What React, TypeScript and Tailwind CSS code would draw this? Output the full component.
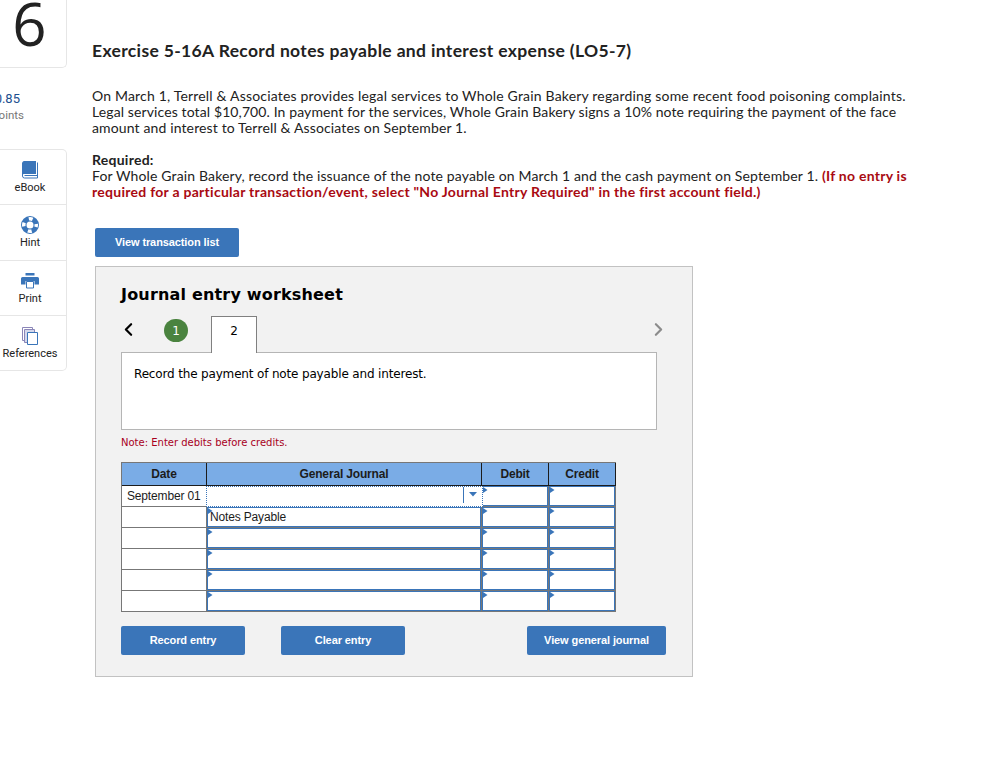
import { ChevronLeft, ChevronRight } from "lucide-react";

interface toolData {
  label: string;
  icon: React.ReactNode;
  height: string;
}

const tools: toolData[] = [
  {
    label: "eBook",
    height: "h-[55px]",
    icon: (
      <svg width="18" height="20" viewBox="0 0 18 20" fill="none">
        <path d="M3 1h12v13H3a2 2 0 0 0-1.500 1V2.500A1.500 1.500 0 0 1 3 1z" fill="#3a75b9" />
        <path d="M1.500 2.500v13.500a2 2 0 0 0 2 2h13V2.500M3.500 15.500h13" stroke="#3a75b9" strokeWidth="1" />
      </svg>
    ),
  },
  {
    label: "Hint",
    height: "h-[56px]",
    icon: (
      <svg width="18" height="20" viewBox="0 0 18 20" fill="none">
        <circle cx="9" cy="10" r="6.250" stroke="#3a75b9" strokeWidth="5.500" />
        <circle cx="9" cy="10" r="6.250" stroke="#fff" strokeWidth="3.500" strokeDasharray="4 5.817" strokeDashoffset="2" />
      </svg>
    ),
  },
  {
    label: "Print",
    height: "h-[55px]",
    icon: (
      <svg width="18" height="20" viewBox="0 0 18 20" fill="none">
        <path d="M4.500 2h9v2.500h-9z" fill="#3a75b9" />
        <path d="M1.500 6h15A1.500 1.500 0 0 1 18 7.500v6h-4.500V10h-9v3.500H0v-6A1.500 1.500 0 0 1 1.500 6z" fill="#3a75b9" />
        <path d="M5.500 10.500h7v6.500h-7z" fill="#fff" stroke="#3a75b9" />
      </svg>
    ),
  },
  {
    label: "References",
    height: "h-[55px]",
    icon: (
      <svg width="18" height="20" viewBox="0 0 18 20" stroke="#3a75b9">
        <path d="M1.500 1.500h10v13h-10z" fill="#fff" stroke="#8b86b8" />
        <path d="M3.500 3.500h10v13h-10z" fill="#d5d9ec" stroke="#8b86b8" />
        <path d="M6.500 6.500h10v12h-10z" fill="#fff" />
      </svg>
    ),
  },
];

const rows = [
  { date: "September 01", account: "" },
  { date: "", account: "Notes Payable" },
  { date: "", account: "" },
  { date: "", account: "" },
  { date: "", account: "" },
  { date: "", account: "" },
];

function Corner() {
  return (
    <svg className="absolute top-0 left-0" width="5" height="6" viewBox="0 0 5 6">
      <path d="M0 0l4.500 3L0 6z" fill="#3a75b9" />
    </svg>
  );
}

function EntryCell({ text }: { text?: string }) {
  return (
    <div className="border-r border-b border-[#777]">
      <div className="relative h-5 border border-[#3a75b9] bg-white pl-0.5 leading-[18px]">
        <Corner />
        {text}
      </div>
    </div>
  );
}

function ActiveCell() {
  return (
    <div className="relative z-10 -ml-px flex h-[21px] w-[277px] justify-end border border-dotted border-[#3a75b9] bg-white">
      <div className="mr-1 h-4 w-[15px] border-l border-[#3a75b9]">
        <svg className="mt-[5px] ml-[5px]" width="8" height="5" viewBox="0 0 8 5">
          <path d="M0 0h8L4 4.500z" fill="#3a75b9" />
        </svg>
      </div>
    </div>
  );
}

function Button({ label, width }: { label: string; width: string }) {
  return (
    <button
      className={`${width} h-[29px] rounded-[2px] bg-[#3a75b9] pb-[2px] text-[11px] font-bold tracking-[-0.1px] text-white`}
    >
      {label}
    </button>
  );
}

function Sidebar() {
  return (
    <div className="w-[67px] shrink-0 font-['Roboto',sans-serif] text-[#222]">
      <div className="h-[68px] rounded-br-[5px] border-r border-b border-[#e6e6e6] pr-[7px]">
        <div className="text-center font-['Open_Sans',sans-serif] text-[60px] leading-[46px]">6</div>
      </div>
      <div className="mt-[23px] flex h-4 w-5 justify-end text-[13px] leading-4 text-[#1c4f8f]">
        <span>0.85</span>
      </div>
      <div className="flex h-4 w-6 justify-end text-[11.5px] leading-4 text-[#777]">
        <span>points</span>
      </div>
      <div className="mt-[26px] h-[222px] rounded-r-[5px] border-t border-r border-b border-[#e6e6e6]">
        {tools.map((tool, i) => (
          <div
            key={tool.label}
            className={`${tool.height} flex flex-col items-center pt-[10px] pr-[6px] text-[11px] leading-[15px] ${
              i < 3 ? "border-b border-[#e6e6e6]" : ""
            }`}
          >
            {tool.icon}
            <span>{tool.label}</span>
          </div>
        ))}
      </div>
    </div>
  );
}

function Worksheet() {
  return (
    <div className="mt-[9px] ml-[3px] h-[411px] w-[598px] border border-[#c2c2c2] bg-[#f2f2f2] pl-[25px] font-['DejaVu_Sans',sans-serif] tracking-normal text-black">
      <h2 className="pt-4 text-[16px] leading-6 font-bold tracking-[0.18px]">Journal entry worksheet</h2>
      <div className="mt-[9px] flex h-9">
        <ChevronLeft className="mt-[3px] -ml-[3px]" size={21} strokeWidth={2.5} />
        <div className="mt-[3px] ml-[25px] flex h-[23px] w-6 items-center justify-center rounded-full bg-[#4a833f] text-[12px] text-white">
          1
        </div>
        <div className="relative z-10 ml-[23px] h-[37px] w-[46px] border-t border-r border-l border-[#808080] bg-white pt-[5px] text-center text-[12px] leading-[18px]">
          2
        </div>
        <ChevronRight className="mt-[3px] ml-[391px] text-[#8c8c8c]" size={21} strokeWidth={2.5} />
      </div>
      <div className="h-[78px] w-[536px] border border-[#b5b5b5] bg-white pt-3 pl-3 text-[12px] leading-[18px] tracking-[-0.16px]">
        Record the payment of note payable and interest.
      </div>
      <div className="mt-[5px] text-[10px] leading-4 text-[#a8001c]">Note: Enter debits before credits.</div>
      <div className="mt-[11px] grid w-[495px] grid-cols-[85px_275px_67px_67px] border-t border-l border-[#777] font-['Liberation_Sans',sans-serif] text-[12px] tracking-[-0.16px] text-[#1c1c1c]">
        {["Date", "General Journal", "Debit", "Credit"].map((name) => (
          <div
            key={name}
            className="h-[23px] border-r border-b border-[#1c1c1c] bg-[#7aace6] text-center leading-[22px] font-bold"
          >
            {name}
          </div>
        ))}
        {rows.map((row, i) => (
          <div key={i} className="contents">
            <div className="h-[21px] border-r border-b border-[#777] bg-white pl-[5px] leading-5">{row.date}</div>
            {i === 0 ? <ActiveCell /> : <EntryCell text={row.account} />}
            <EntryCell />
            <EntryCell />
          </div>
        ))}
      </div>
      <div className="mt-[14px] flex font-['Liberation_Sans',sans-serif]">
        <Button label="Record entry" width="w-[124px] mr-9" />
        <Button label="Clear entry" width="w-[124px] mr-[122px]" />
        <Button label="View general journal" width="w-[139px]" />
      </div>
    </div>
  );
}

export default function App() {
  return (
    <div className="flex h-[783px] w-[984px] overflow-hidden bg-white">
      <Sidebar />
      <div className="ml-[25px] font-['Lato',sans-serif] text-[14px] leading-4 whitespace-nowrap text-[#222]">
        <h1 className="pt-[39px] text-[17.5px] leading-6 font-bold tracking-[0.35px]">
          Exercise 5-16A Record notes payable and interest expense (LO5-7)
        </h1>
        <div className="mt-[25px]">
          <div className="tracking-[0.18px]">
            On March 1, Terrell &amp; Associates provides legal services to Whole Grain Bakery regarding some recent food poisoning complaints.
          </div>
          <div className="tracking-[0.11px]">
            Legal services total $10,700. In payment for the services, Whole Grain Bakery signs a 10% note requiring the payment of the face
          </div>
          <div className="tracking-[0.13px]">amount and interest to Terrell &amp; Associates on September 1.</div>
        </div>
        <div className="mt-4 font-bold tracking-[0.25px]">Required:</div>
        <div>
          <span className="tracking-[0.14px]">
            For Whole Grain Bakery, record the issuance of the note payable on March 1 and the cash payment on September 1.{" "}
          </span>
          <b className="tracking-[0.25px] text-[#a90a12]">(If no entry is</b>
        </div>
        <div className="font-bold tracking-[0.27px] text-[#a90a12]">
          required for a particular transaction/event, select "No Journal Entry Required" in the first account field.)
        </div>
        <div className="mt-7 ml-[3px] font-['Liberation_Sans',sans-serif]">
          <Button label="View transaction list" width="w-[144px]" />
        </div>
        <Worksheet />
      </div>
    </div>
  );
}
